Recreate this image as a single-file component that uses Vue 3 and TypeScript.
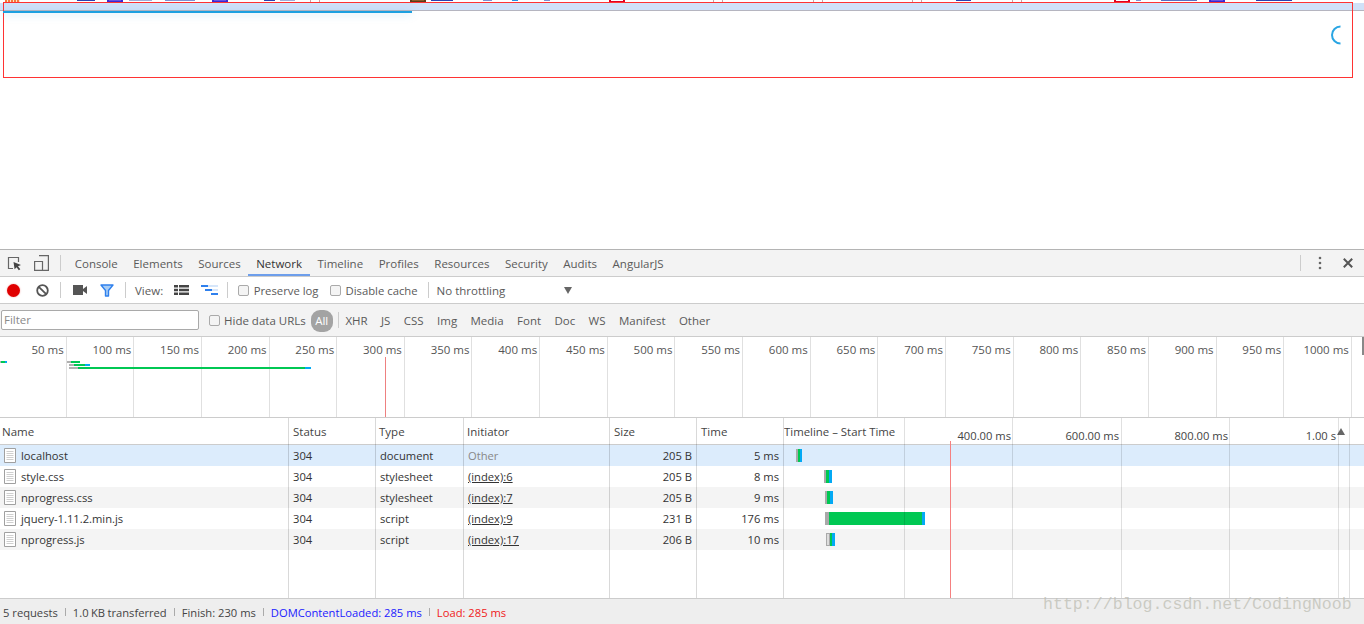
<script setup lang="ts">
const tabs = ['Console', 'Elements', 'Sources', 'Network', 'Timeline', 'Profiles', 'Resources', 'Security', 'Audits', 'AngularJS']
const types = ['XHR', 'JS', 'CSS', 'Img', 'Media', 'Font', 'Doc', 'WS', 'Manifest', 'Other']
const ticks = Array.from({ length: 20 }, (_, i) => `${(i + 1) * 50} ms`)
const cols = ['Name', 'Status', 'Type', 'Initiator', 'Size', 'Time']
const colLines = [288, 375, 463, 609, 696, 783, 904, 950, 1012, 1121, 1229, 1338, 1349]
const heads = [
  { label: '400.00 ms', width: 109 },
  { label: '600.00 ms', width: 108 },
  { label: '800.00 ms', width: 109 },
  { label: '1.00 s', width: 108 },
]
const rows = [
  { name: 'localhost', status: '304', type: 'document', init: 'Other', link: false, size: '205 B', time: '5 ms', g: 796, gw: 2, s: 798, sw: 2, b: 800, bw: 2, hollow: false },
  { name: 'style.css', status: '304', type: 'stylesheet', init: '(index):6', link: true, size: '205 B', time: '8 ms', g: 824, gw: 2, s: 826, sw: 3, b: 829, bw: 3, hollow: false },
  { name: 'nprogress.css', status: '304', type: 'stylesheet', init: '(index):7', link: true, size: '205 B', time: '9 ms', g: 825, gw: 2, s: 827, sw: 3, b: 830, bw: 3, hollow: false },
  { name: 'jquery-1.11.2.min.js', status: '304', type: 'script', init: '(index):9', link: true, size: '231 B', time: '176 ms', g: 825, gw: 4, s: 829, sw: 93, b: 922, bw: 3, hollow: false },
  { name: 'nprogress.js', status: '304', type: 'script', init: '(index):17', link: true, size: '206 B', time: '10 ms', g: 826, gw: 4, s: 830, sw: 2, b: 832, bw: 3, hollow: true },
]
const miniBars = [
  { x: 0, y: 361, w: 1, c: '#b0b0b0' }, { x: 1, y: 361, w: 4, c: '#00c853' }, { x: 5, y: 361, w: 2, c: '#03a9f4' },
  { x: 67, y: 361, w: 4, c: '#b0b0b0' }, { x: 71, y: 361, w: 9, c: '#00c853' },
  { x: 69, y: 364, w: 5, c: '#b0b0b0' }, { x: 74, y: 364, w: 11, c: '#00c853' }, { x: 85, y: 364, w: 5, c: '#03a9f4' },
  { x: 69, y: 367, w: 9, c: '#b0b0b0' }, { x: 78, y: 367, w: 227, c: '#00c853' }, { x: 305, y: 367, w: 6, c: '#03a9f4' },
]
const textBits = [
  [77, 18, '#2b3fae'], [129, 23, '#a0acd8'], [165, 30, '#7f8fd0'], [264, 11, '#2b3fae'], [280, 15, '#a0acd8'],
  [431, 22, '#2b3fae'], [483, 9, '#7f8fd0'], [512, 6, '#2b8fe0'], [544, 6, '#7f8fd0'], [956, 15, '#2b3fae'],
  [1136, 5, '#7f8fd0'], [1161, 36, '#5a6cc0'], [1256, 36, '#2b3fae'],
]
const iconBoxes = [
  { x: 107, c: '#3a28d0', f: '#6a50e0' }, { x: 212, c: '#3a28d0', f: '#6a50e0' }, { x: 410, c: '#5a3a18', f: '#8a5a28' },
  { x: 609, c: '#e00020', f: '#fff' }, { x: 1114, c: '#e00020', f: '#fff' }, { x: 1209, c: '#3a28d0', f: '#6a50e0' },
]
const tiles = [310, 713, 813, 912, 1012]
</script>

<template>
  <div class="page">
    <section class="view">
      <div class="strip">
        <i class="frag orange"></i>
        <i v-for="j in textBits" :key="String(j[0])" class="frag" :style="{ left: j[0] + 'px', width: j[1] + 'px', background: String(j[2]) }"></i>
        <i v-for="b in iconBoxes" :key="b.x" class="ibox" :style="{ left: b.x + 'px', borderColor: b.c, background: b.f }"></i>
        <i v-for="t in tiles" :key="t" class="tile" :style="{ left: t + 'px' }"></i>
      </div>
      <div class="band"></div>
      <div class="redbox"></div>
      <div class="progress"></div>
      <svg class="spinner" width="14" height="20" viewBox="0 0 14 20"><path d="M10.500 1.500A8.500 8.500 0 0 0 10.500 18.500" fill="none" stroke="#29a5e3" stroke-width="2" /></svg>
    </section>

    <section class="devtools">
      <div class="tabbar">
        <div class="tool-icons">
          <svg width="15" height="15" viewBox="0 0 15 15"><path d="M6 12.500H1.500V1.500h10V6" fill="none" stroke="#666" stroke-width="1.200" /><path d="M6.500 6l7.500 3-3 1.200 2.300 3-1.500 1.100-2.200-3-2 2z" fill="#444" /></svg>
          <svg width="15" height="16" viewBox="0 0 15 16"><path d="M5 .600h9.400v14.800H.6V6.500H8.500v8.900" fill="none" stroke="#666" stroke-width="1.200" /></svg>
        </div>
        <span class="sep"></span>
        <div class="tabs">
          <span v-for="t in tabs" :key="t" class="tab" :class="{ active: t === 'Network' }">{{ t }}</span>
        </div>
        <div class="right-icons">
          <span class="sep"></span>
          <svg width="4" height="14" viewBox="0 0 4 14"><circle cx="2" cy="2" r="1.300" fill="#666" /><circle cx="2" cy="7" r="1.300" fill="#666" /><circle cx="2" cy="12" r="1.300" fill="#666" /></svg>
          <svg width="10" height="10" viewBox="0 0 10 10"><path d="M.8.8l8.400 8.400M9.200.8L.8 9.200" stroke="#555" stroke-width="2" /></svg>
        </div>
      </div>

      <div class="toolbar">
        <span class="rec"></span>
        <svg class="clear" width="13" height="13" viewBox="0 0 13 13"><circle cx="6.500" cy="6.500" r="5.300" fill="none" stroke="#555" stroke-width="1.800" /><path d="M2.800 2.800l7.400 7.400" stroke="#555" stroke-width="1.800" /></svg>
        <span class="sep s1"></span>
        <svg class="cam" width="14" height="10" viewBox="0 0 14 10"><path d="M0 0h10v10H0zM10 4l4-3v8l-4-3z" fill="#555" /></svg>
        <svg class="funnel" width="14" height="13" viewBox="0 0 14 13"><path d="M1 1h12L8.500 6.500V12h-3V6.500z" fill="#a8cdf5" stroke="#2f80ed" stroke-width="1.400" stroke-linejoin="round" /></svg>
        <span class="sep s2"></span>
        <span class="lbl view-lbl">View:</span>
        <svg class="v1" width="15" height="10" viewBox="0 0 15 10"><path d="M0 0h4v2.500H0zM5 0h10v2.500H5zM0 3.750h4v2.500H0zM5 3.750h10v2.500H5zM0 7.500h4V10H0zM5 7.500h10V10H5z" fill="#444" /></svg>
        <svg class="v2" width="17" height="11" viewBox="0 0 17 11"><path d="M0 0h7v2H0zM4 4h7v2H4zM10 8h7v2h-7z" fill="#2f80ed" /><path d="M7 0h10v2H7zM11 4h6v2h-6z" fill="#d6e6fa" /></svg>
        <span class="sep s3"></span>
        <label class="chk c1"><i class="box"></i>Preserve log</label>
        <label class="chk c2"><i class="box"></i>Disable cache</label>
        <span class="sep s4"></span>
        <span class="lbl throttle">No throttling</span>
        <i class="caret"></i>
      </div>

      <div class="filterbar">
        <div class="filter">Filter</div>
        <label class="chk c3"><i class="box"></i>Hide data URLs</label>
        <span class="all">All</span>
        <span class="sep s5"></span>
        <span v-for="t in types" :key="t" class="ftype">{{ t }}</span>
      </div>

      <div class="overview">
        <div v-for="t in ticks" :key="t" class="tick">{{ t }}</div>
        <i v-for="b in miniBars" :key="`${b.x}-${b.y}`" class="mini" :style="{ top: b.y - 337 + 'px', left: b.x + 'px', width: b.w + 'px', background: b.c }"></i>
        <i class="ov-load"></i>
        <i class="ov-thumb"></i>
      </div>

      <div class="grid-wrap">
        <div class="head">
          <div v-for="c in cols" :key="c" class="hcell">{{ c }}</div>
          <div class="hcell wf">Timeline – Start Time</div>
          <div class="wf-heads">
            <span v-for="h in heads" :key="h.label" class="wf-head" :style="{ width: h.width + 'px' }">{{ h.label }}</span>
          </div>
          <i class="sort"></i>
        </div>
        <div class="rows">
          <div v-for="(r, i) in rows" :key="r.name" class="row" :class="{ sel: i === 0, alt: i % 2 === 0 && i > 0 }">
            <div class="cell name">
              <svg width="12" height="15" viewBox="0 0 12 15"><path d="M.5.500h11v14H.5z" fill="#fff" stroke="#a0a0a0" /><path d="M2.500 3.500h7M2.500 5.500h7M2.500 7.500h7M2.500 9.500h7M2.500 11.500h7" stroke="#cfcfcf" /></svg>
              {{ r.name }}
            </div>
            <div class="cell">{{ r.status }}</div>
            <div class="cell">{{ r.type }}</div>
            <div class="cell" :class="r.link ? 'link' : 'muted'"><span>{{ r.init }}</span></div>
            <div class="cell num">{{ r.size }}</div>
            <div class="cell num">{{ r.time }}</div>
            <div class="cell"></div>
            <i class="seg" :class="{ hollow: r.hollow }" :style="{ left: r.g + 'px', width: r.gw + 'px' }"></i>
            <i class="seg green" :style="{ left: r.s + 'px', width: r.sw + 'px' }"></i>
            <i class="seg blue" :style="{ left: r.b + 'px', width: r.bw + 'px' }"></i>
          </div>
        </div>
        <i v-for="x in colLines" :key="x" class="vline" :class="{ red: x === 950, strong: x < 800 }" :style="{ left: x + 'px' }"></i>
      </div>

      <div class="footer">
        <span>5 requests</span><b></b>
        <span class="xfer">1.0 KB transferred</span><b></b>
        <span>Finish: 230 ms</span><b></b>
        <span class="dcl">DOMContentLoaded: 285 ms</span><b></b>
        <span class="load">Load: 285 ms</span>
      </div>
      <div class="watermark">http://blog.csdn.net/CodingNoob</div>
    </section>
  </div>
</template>

<style>
html, body { margin: 0; background: #fff; overflow: hidden; }
</style>

<style scoped>
.page { width: 1364px; height: 624px; display: flex; flex-direction: column; font-family: "Open Sans", "Noto Sans", sans-serif; font-size: 11.5px; color: #333; overflow: hidden; }
.view { position: relative; height: 249px; background: #fff; }
.strip { position: relative; height: 3px; overflow: hidden; }
.frag { position: absolute; top: 0; height: 1px; }
.frag.orange { left: 5px; width: 15px; height: 2px; background: repeating-linear-gradient(90deg, #f47a3c 0 2px, #fde0cc 2px 3px); }
.ibox { position: absolute; top: 0; width: 12px; height: 1px; border: 2px solid; border-top: 0; }
.tile { position: absolute; top: 0; width: 8px; height: 3px; background: #fff; border-left: 1px solid #c8a0a0; border-right: 1px solid #c8a0a0; }
.band { height: 7px; background: #d0e1f8; border-bottom: 1px solid #b5b5c0; }
.redbox { position: absolute; left: 3px; top: 2px; width: 1348px; height: 74px; border: 1px solid #ff3333; }
.progress { position: absolute; left: 3px; top: 11px; width: 409px; height: 2px; background: #1ca0e0; box-shadow: 0 1px 8px rgba(41, 157, 224, .35); }
.spinner { position: absolute; left: 1330px; top: 25px; }
.devtools { position: relative; flex: 1; display: flex; flex-direction: column; background: #fff; }
.sep { display: block; width: 1px; height: 16px; background: #ccc; flex: none; }
.tabbar { height: 28px; display: flex; align-items: center; box-sizing: border-box; background: #f3f3f3; border-top: 1px solid #b4b4b4; border-bottom: 1px solid #ccc; padding-left: 7px; }
.tool-icons { display: flex; gap: 12px; align-items: center; width: 51px; }
.tabbar > .sep { margin: 0 6px 0 2px; }
.tabs { display: flex; flex: 1; align-self: stretch; }
.tab { padding: 0 7.750px; line-height: 27px; color: #5a5a5a; }
.tab.active { color: #333; box-shadow: inset 0 -2px 0 #6d9eeb; }
.right-icons { display: flex; align-items: center; margin-right: 11px; }
.right-icons svg:nth-child(2) { margin: 0 21px 0 17px; }
.toolbar { height: 27px; box-sizing: border-box; display: flex; align-items: center; background: #fff; border-bottom: 1px solid #ccc; padding-left: 7px; }
.rec { width: 13px; height: 13px; border-radius: 50%; background: #e00000; box-shadow: 0 0 2px #f0a0a0; }
.clear { margin-left: 16px; }
.s1 { margin-left: 11px; }
.cam { margin-left: 12px; }
.funnel { margin-left: 13px; }
.s2 { margin-left: 11px; }
.lbl { color: #5a5a5a; }
.view-lbl { margin-left: 9px; }
.v1 { margin-left: 11px; }
.v2 { margin-left: 12px; }
.s3 { margin-left: 9px; }
.chk { display: flex; align-items: center; color: #5a5a5a; }
.box { width: 9px; height: 9px; border: 1px solid #aaa; border-radius: 2px; background: #f4f4f4; margin-right: 4.500px; }
.c1 { margin-left: 10px; font-size: 11.300px; }
.c2 { margin-left: 11.500px; font-size: 11.300px; }
.s4 { margin-left: 10px; }
.throttle { margin-left: 8px; width: 127px; }
.caret { width: 0; height: 0; border-left: 4.500px solid transparent; border-right: 4.500px solid transparent; border-top: 7px solid #666; }
.filterbar { height: 33px; box-sizing: border-box; display: flex; align-items: center; background: #f3f3f3; border-bottom: 1px solid #ccc; padding-left: 1px; }
.filter { width: 194px; height: 18px; border: 1px solid #a9a9a9; border-radius: 2px; background: #fff; color: #8a8a8a; line-height: 18px; padding-left: 2px; }
.c3 { margin-left: 10px; }
.c3 .box { margin-right: 4px; }
.all { margin: 1px 0 0 5px; width: 22px; height: 22px; border-radius: 9px; background: #a3a3a3; color: #fff; text-align: center; line-height: 22px; }
.s5 { margin-left: 5px; margin-right: 0; }
.ftype { padding: 0 6.700px; color: #5a5a5a; }
.overview { position: relative; height: 81px; box-sizing: border-box; display: grid; grid-template-columns: repeat(20, 67.65px); background: #fff; border-bottom: 1px solid #ccc; }
.tick { box-sizing: border-box; border-right: 1px solid #e0e0e0; text-align: right; padding: 5px 2px 0 0; color: #555; white-space: nowrap; margin-right: 1px; }
.mini { position: absolute; height: 2px; }
.ov-load { position: absolute; left: 385px; top: 20px; width: 1px; height: 60px; background: #ee8080; }
.ov-thumb { position: absolute; left: 1362px; top: 0; width: 2px; height: 18px; background: #888; }
.grid-wrap { position: relative; flex: 1; min-height: 0; background: #fff; }
.head { position: relative; height: 27px; display: grid; grid-template-columns: 289px 87px 88px 146px 87px 87px 121px; box-sizing: border-box; background: #fff; border-bottom: 1px solid #ccc; }
.hcell { padding-left: 4px; line-height: 27px; color: #444; white-space: nowrap; overflow: hidden; }
.hcell:first-child { padding-left: 2px; }
.hcell:nth-child(3), .hcell:nth-child(4) { padding-left: 3px; }
.hcell.wf { padding-left: 0; font-size: 11.400px; }
.wf-heads { position: absolute; left: 904px; top: 0; display: flex; }
.wf-head { text-align: right; padding-right: 2px; box-sizing: border-box; line-height: 36px; white-space: nowrap; color: #444; font-size: 11.200px; }
.sort { position: absolute; left: 1337px; top: 10px; width: 0; height: 0; border-left: 4.500px solid transparent; border-right: 4.500px solid transparent; border-bottom: 7px solid #666; }
.rows { display: flex; flex-direction: column; }
.row { position: relative; height: 21px; display: grid; grid-template-columns: 289px 87px 88px 146px 87px 87px 1fr; background: #fff; font-size: 11.200px; }
.row.sel { background: #dcecfc; }
.row.alt { background: #f4f4f4; }
.cell { padding: 0 4px; line-height: 21px; white-space: nowrap; overflow: hidden; }
.name { display: flex; align-items: center; gap: 5px; padding-left: 4px; color: #333; }
.muted { color: #888; }
.link span { text-decoration: underline; color: #333; }
.cell.num { text-align: right; padding-right: 5px; }
.seg { position: absolute; top: 4px; height: 13px; background: #a9a9a9; }
.seg.hollow { box-sizing: border-box; background: #ddd; border: 1px solid #a9a9a9; }
.seg.green { background: #00c853; }
.seg.blue { background: #03a9f4; }
.vline { position: absolute; top: 0; bottom: 0; width: 1px; background: rgba(0, 0, 0, .12); }
.vline.strong { background: rgba(0, 0, 0, .15); }
.vline.red { background: #f58080; top: 23px; }
.footer { height: 26px; box-sizing: border-box; display: flex; align-items: center; gap: 7px; padding: 1px 0 0 3px; background: #eee; border-top: 1px solid #ccc; color: #444; font-size: 11.200px; }
.footer b { width: 1px; height: 8px; background: #aaa; }
.xfer { word-spacing: -.5px; }
.dcl { color: #2020ff; }
.load { color: #f02020; }
.watermark { position: absolute; left: 1043px; top: 346px; font-family: "Liberation Mono", "DejaVu Sans Mono", monospace; font-size: 16.600px; color: rgba(190, 190, 180, .75); white-space: nowrap; }
</style>
